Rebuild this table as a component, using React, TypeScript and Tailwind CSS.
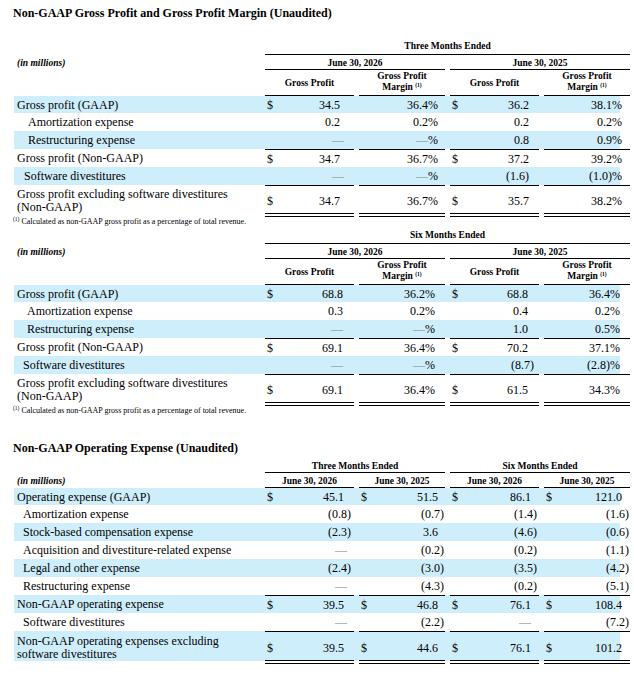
import React from 'react';

const HL = 'bg-[#cfeefc]';
const COLW = ['w-[89px]', 'w-[86px]', 'w-[89px]', 'w-[86px]'];

type C = { v: string; d?: boolean; pr?: string };
type R = {
  label: React.ReactNode;
  pl: string;
  hl?: boolean;
  top?: boolean;
  tall?: boolean;
  h?: string;
  cells: C[];
};

function Val({ v }: { v: string }) {
  if (v.startsWith('—'))
    return (
      <span>
        <span className="text-[#7f7f7f]">—</span>
        {v.slice(1)}
      </span>
    );
  return <span>{v}</span>;
}

function DataRow({ r, prs, tallH }: { r: R; prs: string[]; tallH: string }) {
  const h = r.tall ? tallH : r.h ?? 'h-[18px]';
  return (
    <div className={`flex gap-[5px] ${h} ${r.hl ? HL : ''}`}>
      <div
        className={`w-[246px] shrink-0 flex ${
          r.tall ? 'items-end leading-[13px]' : 'items-center'
        } ${r.pl}`}
      >
        <div>{r.label}</div>
      </div>
      {r.cells.map((c, i) => (
        <div
          key={i}
          className={`${COLW[i]} shrink-0 flex justify-between pl-[2px] ${c.pr ?? prs[i]} ${
            r.tall ? 'items-end pb-[3px] border-b border-black' : 'items-center'
          } ${r.top ? 'border-t border-black' : ''}`}
        >
          <span>{c.d ? '$' : ''}</span>
          <Val v={c.v} />
        </div>
      ))}
    </div>
  );
}

function Underline() {
  return (
    <div className="flex gap-[5px] h-[3px]">
      <div className="w-[246px] shrink-0" />
      {COLW.map((w, i) => (
        <div key={i} className={`${w} shrink-0 border-b border-black`} />
      ))}
    </div>
  );
}

function Footnote() {
  return (
    <div className="h-[10px] leading-[10px] text-[8px] -ml-[1px]">
      <sup className="text-[5.5px]">(1)</sup> Calculated as non-GAAP gross profit as a percentage of total revenue.
    </div>
  );
}

function GPHeader({ period }: { period: string }) {
  return (
    <div className="text-[9.5px] font-bold leading-[12px]">
      <div className="flex gap-[5px] h-[15px]">
        <div className="w-[246px] shrink-0" />
        <div className="w-[365px] shrink-0 border-b border-black text-center">{period}</div>
      </div>
      <div className="flex gap-[5px] h-[15px]">
        <div className="w-[246px] shrink-0 pl-[3px] pt-[2px] italic">(in millions)</div>
        <div className="w-[180px] shrink-0 border-b border-black text-center pt-[2px]">June 30, 2026</div>
        <div className="w-[180px] shrink-0 border-b border-black text-center pt-[2px]">June 30, 2025</div>
      </div>
      <div className="flex gap-[5px] h-[26px]">
        <div className="w-[246px] shrink-0" />
        {[0, 1, 2, 3].map((i) =>
          i % 2 === 1 ? (
            <div
              key={i}
              className={`${COLW[i]} shrink-0 border-b border-black flex flex-col justify-center items-center text-center leading-[10.5px] pb-[2px]`}
            >
              <span>Gross Profit</span>
              <span>
                Margin <sup className="text-[5.5px]">(1)</sup>
              </span>
            </div>
          ) : (
            <div
              key={i}
              className={`${COLW[i]} shrink-0 border-b border-black flex items-center justify-center text-center`}
            >
              Gross Profit
            </div>
          )
        )}
      </div>
    </div>
  );
}

const t1: R[] = [
  {
    label: 'Gross profit (GAAP)',
    pl: 'pl-[3px]',
    hl: true,
    h: 'h-[17px]',
    cells: [{ v: '34.5', d: true }, { v: '36.4%' }, { v: '36.2', d: true }, { v: '38.1%' }],
  },
  {
    label: 'Amortization expense',
    pl: 'pl-[14px]',
    cells: [{ v: '0.2' }, { v: '0.2%' }, { v: '0.2' }, { v: '0.2%' }],
  },
  {
    label: 'Restructuring expense',
    pl: 'pl-[14px]',
    hl: true,
    cells: [{ v: '—', pr: 'pr-[10px]' }, { v: '—%' }, { v: '0.8' }, { v: '0.9%' }],
  },
  {
    label: 'Gross profit (Non-GAAP)',
    pl: 'pl-[3px]',
    top: true,
    cells: [{ v: '34.7', d: true }, { v: '36.7%' }, { v: '37.2', d: true }, { v: '39.2%' }],
  },
  {
    label: 'Software divestitures',
    pl: 'pl-[10px]',
    hl: true,
    cells: [{ v: '—', pr: 'pr-[10px]' }, { v: '—%' }, { v: '(1.6)' }, { v: '(1.0)%' }],
  },
  {
    label: (
      <>
        Gross profit excluding software divestitures
        <br />
        (Non-GAAP)
      </>
    ),
    pl: 'pl-[3px]',
    top: true,
    tall: true,
    cells: [{ v: '34.7', d: true }, { v: '36.7%' }, { v: '35.7', d: true }, { v: '38.2%' }],
  },
];

const t2: R[] = [
  {
    label: 'Gross profit (GAAP)',
    pl: 'pl-[3px]',
    hl: true,
    h: 'h-[17px]',
    cells: [{ v: '68.8', d: true }, { v: '36.2%' }, { v: '68.8', d: true }, { v: '36.4%' }],
  },
  {
    label: 'Amortization expense',
    pl: 'pl-[13px]',
    cells: [{ v: '0.3' }, { v: '0.2%' }, { v: '0.4' }, { v: '0.2%' }],
  },
  {
    label: 'Restructuring expense',
    pl: 'pl-[13px]',
    hl: true,
    cells: [{ v: '—' }, { v: '—%' }, { v: '1.0' }, { v: '0.5%' }],
  },
  {
    label: 'Gross profit (Non-GAAP)',
    pl: 'pl-[3px]',
    top: true,
    cells: [{ v: '69.1', d: true }, { v: '36.4%' }, { v: '70.2', d: true }, { v: '37.1%' }],
  },
  {
    label: 'Software divestitures',
    pl: 'pl-[9px]',
    hl: true,
    cells: [{ v: '—' }, { v: '—%' }, { v: '(8.7)', pr: 'pr-[5px]' }, { v: '(2.8)%' }],
  },
  {
    label: (
      <>
        Gross profit excluding software divestitures
        <br />
        (Non-GAAP)
      </>
    ),
    pl: 'pl-[3px]',
    top: true,
    tall: true,
    cells: [{ v: '69.1', d: true }, { v: '36.4%' }, { v: '61.5', d: true }, { v: '34.3%' }],
  },
];

const PLAIN3 = ['pr-[10px]', 'pr-[7px]', 'pr-[8px]', 'pr-[8px]'];
const PAREN3 = ['pr-[3px]', 'pr-[1px]', 'pr-[2px]', 'pr-[1px]'];
const DASH3 = ['pr-[7px]', 'pr-[7px]', 'pr-[8px]', 'pr-[8px]'];

function c3(vals: string[], dollar = false): C[] {
  return vals.map((v, i) => ({
    v,
    d: dollar,
    pr: v.startsWith('(') ? PAREN3[i] : v.startsWith('—') ? DASH3[i] : PLAIN3[i],
  }));
}

const t3: R[] = [
  { label: 'Operating expense (GAAP)', pl: 'pl-[3px]', hl: true, h: 'h-[17px]', cells: c3(['45.1', '51.5', '86.1', '121.0'], true) },
  { label: 'Amortization expense', pl: 'pl-[9px]', cells: c3(['(0.8)', '(0.7)', '(1.4)', '(1.6)']) },
  { label: 'Stock-based compensation expense', pl: 'pl-[9px]', hl: true, cells: c3(['(2.3)', '3.6', '(4.6)', '(0.6)']) },
  { label: 'Acquisition and divestiture-related expense', pl: 'pl-[9px]', cells: c3(['—', '(0.2)', '(0.2)', '(1.1)']) },
  { label: 'Legal and other expense', pl: 'pl-[9px]', hl: true, cells: c3(['(2.4)', '(3.0)', '(3.5)', '(4.2)']) },
  { label: 'Restructuring expense', pl: 'pl-[9px]', cells: c3(['—', '(4.3)', '(0.2)', '(5.1)']) },
  { label: 'Non-GAAP operating expense', pl: 'pl-[3px]', hl: true, top: true, cells: c3(['39.5', '46.8', '76.1', '108.4'], true) },
  { label: 'Software divestitures', pl: 'pl-[9px]', cells: c3(['—', '(2.2)', '—', '(7.2)']) },
  {
    label: (
      <>
        Non-GAAP operating expenses excluding
        <br />
        software divestitures
      </>
    ),
    pl: 'pl-[3px]',
    hl: true,
    top: true,
    tall: true,
    cells: c3(['39.5', '44.6', '76.1', '101.2'], true),
  },
];

export default function App() {
  return (
    <div className="w-[634px] min-h-[678px] bg-white px-[14px] pt-[6px] text-black text-[12px] font-['Liberation_Serif',serif]">
      <div className="font-bold h-[14px] leading-[14px] -ml-[1px]">
        Non-GAAP Gross Profit and Gross Profit Margin (Unaudited)
      </div>

      <div className="mt-[20px]">
        <GPHeader period="Three Months Ended" />
        {t1.map((r, i) => (
          <DataRow key={i} r={r} prs={['pr-[14px]', 'pr-[7px]', 'pr-[10px]', 'pr-[8px]']} tallH="h-[29px]" />
        ))}
        <Underline />
        <Footnote />
      </div>

      <div className="mt-[2px]">
        <GPHeader period="Six Months Ended" />
        {t2.map((r, i) => (
          <DataRow key={i} r={r} prs={['pr-[11px]', 'pr-[10px]', 'pr-[11px]', 'pr-[10px]']} tallH="h-[29px]" />
        ))}
        <Underline />
        <Footnote />
      </div>

      <div className="font-bold h-[14px] leading-[14px] -ml-[1px] mt-[25px]">
        Non-GAAP Operating Expense (Unaudited)
      </div>

      <div className="mt-[5px]">
        <div className="text-[9.5px] font-bold leading-[12px]">
          <div className="flex gap-[5px] h-[13px]">
            <div className="w-[246px] shrink-0" />
            <div className="w-[180px] shrink-0 border-b border-black text-center">Three Months Ended</div>
            <div className="w-[180px] shrink-0 border-b border-black text-center">Six Months Ended</div>
          </div>
          <div className="flex gap-[5px] h-[15px]">
            <div className="w-[246px] shrink-0 pl-[3px] pt-[2px] italic">(in millions)</div>
            {['June 30, 2026', 'June 30, 2025', 'June 30, 2026', 'June 30, 2025'].map((t, i) => (
              <div
                key={i}
                className={`${COLW[i]} shrink-0 border-b border-black text-center pt-[3px] leading-[11px]`}
              >
                {t}
              </div>
            ))}
          </div>
        </div>
        {t3.map((r, i) => (
          <DataRow key={i} r={r} prs={PLAIN3} tallH="h-[30px]" />
        ))}
        <Underline />
      </div>
    </div>
  );
}
